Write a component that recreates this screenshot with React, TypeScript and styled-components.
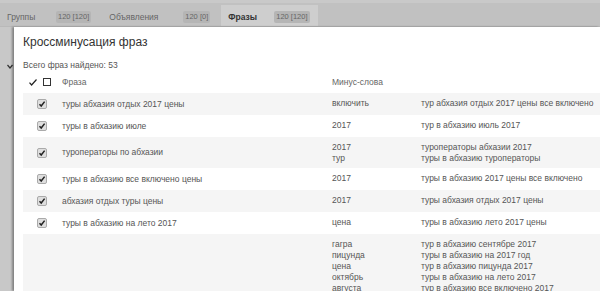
import styled, { createGlobalStyle } from 'styled-components';

const GlobalStyle = createGlobalStyle`
  html, body {
    margin: 0;
    padding: 0;
    overflow: hidden;
    background: #c6c6c6;
    font-family: "Liberation Sans", Arial, sans-serif;
  }
`;

const Page = styled.div`
  display: flex;
  flex-direction: column;
  height: 291px;
`;

const TabBar = styled.div`
  display: flex;
  gap: 3px;
  height: 21px;
  padding-top: 2px;
  background: #c1c1c1;
  border-top: 3px solid #c9c9c9;
  border-bottom: 1px solid #b9b9b9;
`;

const Tab = styled.div<{ $active?: boolean }>`
  display: flex;
  align-items: center;
  padding: 2px 8px 0 7px;
  background: ${(p) => (p.$active ? '#cecece' : 'transparent')};
  color: ${(p) => (p.$active ? '#333' : '#666')};
  font-weight: ${(p) => (p.$active ? 'bold' : 'normal')};
  font-size: 8.5px;
`;

const TabLabel = styled.span<{ $w: number }>`
  width: ${(p) => p.$w}px;
`;

const Badge = styled.span`
  background: #b5b5b5;
  color: #666;
  font-weight: normal;
  font-size: 7.5px;
  line-height: 12px;
  padding: 0 2px;
  border-radius: 2px;
`;

const Main = styled.div`
  display: flex;
  flex: 1;
  min-height: 0;
`;

const LeftStrip = styled.div`
  width: 14px;
  flex: none;
  padding-top: 29px;
  background: #c8c8c8;
  box-sizing: border-box;
`;

const Modal = styled.div`
  flex: 1;
  background: #fff;
  padding-left: 9px;
  box-shadow: -2px 0 2px rgba(0, 0, 0, 0.35);
  overflow: hidden;
`;

const Title = styled.div`
  padding-top: 6px;
  font-size: 12px;
  line-height: 18px;
  color: #333;
`;

const Count = styled.div`
  margin-top: 8px;
  font-size: 8.5px;
  line-height: 12px;
  color: #555;
`;

const Row = styled.div<{ $stripe?: boolean; $header?: boolean }>`
  display: grid;
  grid-template-columns: 39px 270px 89px 1fr;
  min-height: 22px;
  background: ${(p) => (p.$stripe ? '#f5f5f5' : '#fff')};
  font-size: 8.5px;
  color: ${(p) => (p.$header ? '#666' : '#555')};
`;

const HeadMarks = styled.div`
  display: flex;
  align-items: center;
  gap: 6px;
  padding-left: 6px;
`;

const Box = styled.span`
  width: 8px;
  height: 8px;
  border: 1px solid #333;
  box-sizing: border-box;
`;

const CheckCell = styled.div`
  display: flex;
  align-items: center;
  justify-content: center;
  padding-right: 2px;
`;

const Check = styled.span`
  display: flex;
  width: 10px;
  height: 10px;
  border: 1px solid #aaa;
  border-radius: 2px;
  background: #dedede;
  box-sizing: border-box;
`;

const PhraseCell = styled.div`
  align-self: center;
  line-height: 11px;
`;

const ListCell = styled.div`
  padding: 5px 0 4px;
  line-height: 11px;
  white-space: nowrap;
`;

type Item = { phrase: string; minus: string[]; found: string[] };

const rows: Item[] = [
  { phrase: 'туры абхазия отдых 2017 цены', minus: ['включить'], found: ['тур абхазия отдых 2017 цены все включено'] },
  { phrase: 'туры в абхазию июле', minus: ['2017'], found: ['тур в абхазию июль 2017'] },
  {
    phrase: 'туроператоры по абхазии',
    minus: ['2017', 'тур'],
    found: ['туроператоры абхазии 2017', 'туры в абхазию туроператоры'],
  },
  { phrase: 'туры в абхазию все включено цены', minus: ['2017'], found: ['туры в абхазию 2017 цены все включено'] },
  { phrase: 'абхазия отдых туры цены', minus: ['2017'], found: ['туры абхазия отдых 2017 цены'] },
  { phrase: 'туры в абхазию на лето 2017', minus: ['цена'], found: ['туры в абхазию лето 2017 цены'] },
  {
    phrase: 'туры в абхазию 2017',
    minus: [
      'гагра', 'пицунда', 'цена', 'октябрь', 'августа', 'сочи', 'отзывы',
      'недорого', 'отдых', 'июнь', 'лето', 'сентябрь', 'год', 'включено',
    ],
    found: [
      'тур в абхазию сентябре 2017',
      'туры в абхазию на 2017 год',
      'тур в абхазию пицунда 2017',
      'туры в абхазию на лето 2017',
      'тур в абхазию все включено 2017',
      'отдых в абхазию 2017',
      'туры в абхазию из сочи 2017',
      'туры в абхазию отзывы 2017',
      'туры в абхазию недорого 2017',
      'отдых в абхазии туры 2017',
      'туры в абхазию июнь 2017',
      'туры в абхазию лето 2017',
      'туры в абхазию 2017 год',
      'туры в абхазию 2017 все включено',
    ],
  },
];

function Tick() {
  return (
    <svg width="8" height="8" viewBox="0 0 8 8">
      <path d="M1.5 4.2 L3.2 6 L6.6 1.6" fill="none" stroke="#222" strokeWidth="1.5" />
    </svg>
  );
}

export default function App() {
  return (
    <Page>
      <GlobalStyle />
      <TabBar>
        <Tab>
          <TabLabel $w={49}>Группы</TabLabel>
          <Badge>120 [120]</Badge>
        </Tab>
        <Tab>
          <TabLabel $w={74}>Объявления</TabLabel>
          <Badge>120 [0]</Badge>
        </Tab>
        <Tab $active>
          <TabLabel $w={46}>Фразы</TabLabel>
          <Badge>120 [120]</Badge>
        </Tab>
      </TabBar>
      <Main>
        <LeftStrip>
          <svg width="14" height="6" viewBox="0 0 14 6">
            <path d="M7.5 1 L10 4 L12.5 1" fill="none" stroke="#333" strokeWidth="1.2" />
          </svg>
        </LeftStrip>
        <Modal>
          <Title>Кроссминусация фраз</Title>
          <Count>Всего фраз найдено: 53</Count>
          <Row $header>
            <HeadMarks>
              <svg width="8" height="7" viewBox="0 0 8 7">
                <path d="M0.5 3.6 L2.6 6 L7.5 0.5" fill="none" stroke="#222" strokeWidth="1.2" />
              </svg>
              <Box />
            </HeadMarks>
            <PhraseCell>Фраза</PhraseCell>
            <PhraseCell>Минус-слова</PhraseCell>
            <div />
          </Row>
          {rows.map((r, i) => (
            <Row key={i} $stripe={i % 2 === 0}>
              <CheckCell>
                <Check>
                  <Tick />
                </Check>
              </CheckCell>
              <PhraseCell>{r.phrase}</PhraseCell>
              <ListCell>
                {r.minus.map((m) => (
                  <div key={m}>{m}</div>
                ))}
              </ListCell>
              <ListCell>
                {r.found.map((f) => (
                  <div key={f}>{f}</div>
                ))}
              </ListCell>
            </Row>
          ))}
        </Modal>
      </Main>
    </Page>
  );
}
